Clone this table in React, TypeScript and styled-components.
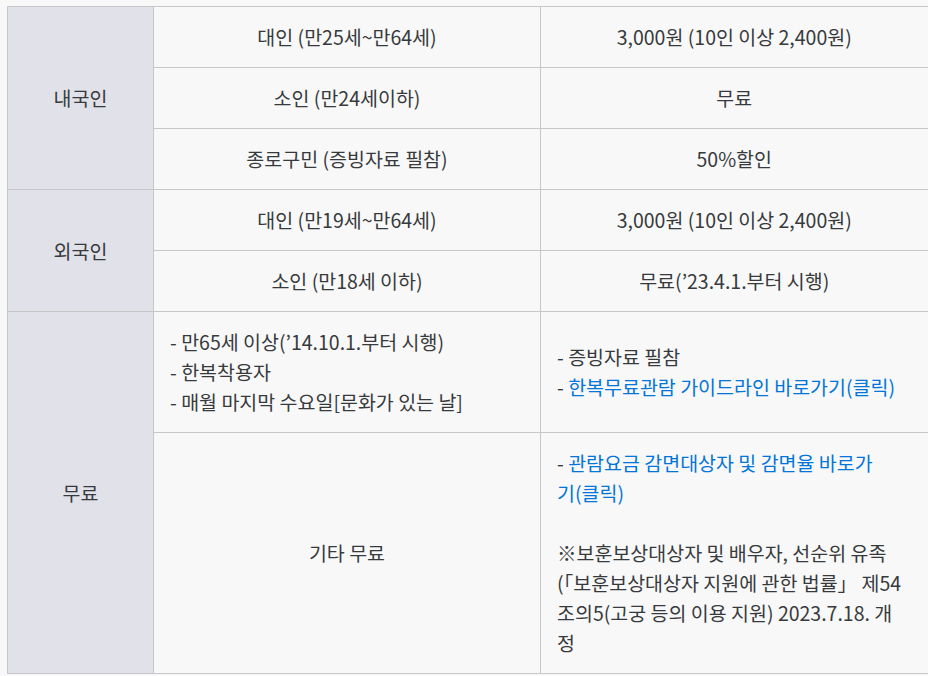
import React from "react";
import styled, { createGlobalStyle } from "styled-components";

const GlobalStyle = createGlobalStyle`
  html, body {
    margin: 0;
    padding: 0;
    background: #f8f8f8;
  }
  body {
    font-family: "Noto Sans CJK KR", "Noto Sans", sans-serif;
    color: #373a3c;
  }
`;

const Page = styled.div`
  padding: 6px 0 0 7px;
`;

const Table = styled.table`
  border-collapse: collapse;
  table-layout: fixed;
  width: 920px;
  font-size: 19.5px;
  line-height: 30px;
`;

const GroupCell = styled.th`
  background: #e1e1ea;
  border: 1px solid #c7c7ca;
  font-weight: 400;
  text-align: center;
  vertical-align: middle;
  padding: 15px 16px;
`;

const Cell = styled.td<{ $left?: boolean; $last?: boolean }>`
  border: 1px solid #c7c7ca;
  ${(p) => (p.$last ? "border-right: none;" : "")}
  text-align: ${(p) => (p.$left ? "left" : "center")};
  vertical-align: middle;
  padding: 15px 16px;
  white-space: nowrap;
`;

const Link = styled.a`
  color: #0275d8;
  text-decoration: none;
`;

export default function App() {
  return (
    <Page>
      <GlobalStyle />
      <Table>
        <colgroup>
          <col style={{ width: 146 }} />
          <col style={{ width: 387 }} />
          <col style={{ width: 387 }} />
        </colgroup>
        <tbody>
          <tr>
            <GroupCell rowSpan={3}>내국인</GroupCell>
            <Cell>대인 (만25세~만64세)</Cell>
            <Cell $last>3,000원 (10인 이상 2,400원)</Cell>
          </tr>
          <tr>
            <Cell>소인 (만24세이하)</Cell>
            <Cell $last>무료</Cell>
          </tr>
          <tr>
            <Cell>종로구민 (증빙자료 필참)</Cell>
            <Cell $last>50%할인</Cell>
          </tr>
          <tr>
            <GroupCell rowSpan={2}>외국인</GroupCell>
            <Cell>대인 (만19세~만64세)</Cell>
            <Cell $last>3,000원 (10인 이상 2,400원)</Cell>
          </tr>
          <tr>
            <Cell>소인 (만18세 이하)</Cell>
            <Cell $last>무료(’23.4.1.부터 시행)</Cell>
          </tr>
          <tr>
            <GroupCell rowSpan={2}>무료</GroupCell>
            <Cell $left>
              - 만65세 이상(’14.10.1.부터 시행)
              <br />- 한복착용자
              <br />- 매월 마지막 수요일[문화가 있는 날]
            </Cell>
            <Cell $left $last>
              - 증빙자료 필참
              <br />- <Link href="#">한복무료관람 가이드라인 바로가기(클릭)</Link>
            </Cell>
          </tr>
          <tr>
            <Cell>기타 무료</Cell>
            <Cell $left $last>
              - <Link href="#">관람요금 감면대상자 및 감면율 바로가<br />기(클릭)</Link>
              <br />
              <br />※보훈보상대상자 및 배우자, 선순위 유족
              <br />(「보훈보상대상자 지원에 관한 법률」 제54
              <br />조의5(고궁 등의 이용 지원) 2023.7.18. 개
              <br />정
            </Cell>
          </tr>
        </tbody>
      </Table>
    </Page>
  );
}
